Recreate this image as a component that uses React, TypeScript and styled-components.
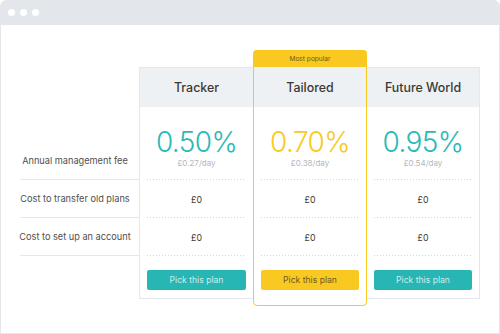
import React from "react";
import styled, { createGlobalStyle, css } from "styled-components";

const GlobalStyle = createGlobalStyle`
  html, body { margin: 0; padding: 0; background: #ffffff; }
  body { font-family: Inter, "Noto Sans", sans-serif; -webkit-font-smoothing: antialiased; }
`;

const TEAL = "#2bb9b5";
const YELLOW = "#f9c922";
const LINE = "#e4e8ec";

type Plan = {
  name: string;
  rate: string;
  perDay: string;
  transfer: string;
  setup: string;
  featured?: boolean;
  edge?: "left" | "right";
};

const plans: Plan[] = [
  { name: "Tracker", rate: "0.50%", perDay: "£0.27/day", transfer: "£0", setup: "£0", edge: "left" },
  { name: "Tailored", rate: "0.70%", perDay: "£0.38/day", transfer: "£0", setup: "£0", featured: true },
  { name: "Future World", rate: "0.95%", perDay: "£0.54/day", transfer: "£0", setup: "£0", edge: "right" },
];

const labels = ["Annual management fee", "Cost to transfer old plans", "Cost to set up an account"];

const Window = styled.div`
  width: 500px;
  height: 334px;
  box-sizing: border-box;
  border: 1px solid ${LINE};
  border-top: none;
  border-radius: 6px 6px 0 0;
  overflow: hidden;
  display: flex;
  flex-direction: column;
`;

const TitleBar = styled.div`
  height: 25px;
  flex: none;
  background: #e3e7eb;
  display: flex;
  align-items: center;
  gap: 5px;
  padding-left: 7px;
`;

const Dot = styled.span`
  width: 7px;
  height: 7px;
  border-radius: 50%;
  background: #ffffff;
`;

const Body = styled.div`
  display: flex;
  padding: 25px 0 0 19px;
`;

const LabelColumn = styled.div`
  width: 119px;
  padding-top: 92px;
  display: flex;
  flex-direction: column;
`;

const LabelCell = styled.div`
  height: 37px;
  border-bottom: 1px solid ${LINE};
  display: flex;
  align-items: center;
  justify-content: center;
  padding-right: 9px;
  font-size: 9.2px;
  color: #4f4f4f;
  white-space: nowrap;
`;

const PlanColumn = styled.div<{ $featured?: boolean; $edge?: "left" | "right" }>`
  width: 114px;
  box-sizing: border-box;
  display: flex;
  flex-direction: column;
  ${({ $featured, $edge }) =>
    $featured
      ? css`
          border: 1px solid ${YELLOW};
          border-radius: 4px;
          padding-bottom: 7px;
        `
      : css`
          margin-top: 17px;
          border-top: 1px solid ${LINE};
          border-bottom: 1px solid ${LINE};
          align-self: flex-start;
          ${$edge === "left" ? `border-left: 1px solid ${LINE};` : `border-right: 1px solid ${LINE}; width: 113px;`}
        `}
`;

const Badge = styled.div`
  height: 17px;
  margin: -1px -1px 0;
  background: ${YELLOW};
  border-radius: 4px 4px 0 0;
  display: flex;
  align-items: center;
  justify-content: center;
  font-size: 6.6px;
  color: #705b16;
`;

const Header = styled.div<{ $featured?: boolean }>`
  height: ${({ $featured }) => ($featured ? "40px" : "39px")};
  background: #eef1f4;
  display: flex;
  align-items: center;
  justify-content: center;
  font-size: 12.4px;
  font-weight: 500;
  color: #3b3835;
`;

const Cell = styled.div<{ $tall?: boolean }>`
  height: 37px;
  margin: 0 7px;
  display: flex;
  flex-direction: column;
  align-items: center;
  justify-content: center;
  background: repeating-linear-gradient(to right, #d3d8dc 0 1px, transparent 1px 3px) bottom / 100% 1px no-repeat;
  padding-top: 1px;
  font-size: 8.8px;
  color: #3b3835;
  ${({ $tall }) =>
    $tall &&
    css`
      justify-content: flex-start;
      padding-top: 20px;
      box-sizing: border-box;
      height: 73px;
    `}
`;

const Rate = styled.div<{ $featured?: boolean }>`
  font-size: 28px;
  font-weight: 300;
  line-height: 30px;
  letter-spacing: -0.6px;
  color: ${({ $featured }) => ($featured ? YELLOW : TEAL)};
`;

const PerDay = styled.div`
  margin-top: 1px;
  font-size: 8px;
  color: #b3b7bb;
`;

const ButtonArea = styled.div`
  padding: 11px 7px 8px;
`;

const PickButton = styled.button<{ $featured?: boolean }>`
  width: 100%;
  height: 20px;
  border: none;
  border-radius: 2px;
  font-family: inherit;
  font-size: 8.6px;
  cursor: pointer;
  background: ${({ $featured }) => ($featured ? YELLOW : "#27b6b3")};
  color: ${({ $featured }) => ($featured ? "#6c5a1b" : "#cdeeed")};
`;

export default function App() {
  return (
    <>
      <GlobalStyle />
      <Window>
        <TitleBar>
          <Dot />
          <Dot />
          <Dot />
        </TitleBar>
        <Body>
          <LabelColumn>
            {labels.map((l) => (
              <LabelCell key={l}>{l}</LabelCell>
            ))}
          </LabelColumn>
          {plans.map((p) => (
            <PlanColumn key={p.name} $featured={p.featured} $edge={p.edge}>
              {p.featured && <Badge>Most popular</Badge>}
              <Header $featured={p.featured}>{p.name}</Header>
              <Cell $tall>
                <Rate $featured={p.featured}>{p.rate}</Rate>
                <PerDay>{p.perDay}</PerDay>
              </Cell>
              <Cell>{p.transfer}</Cell>
              <Cell>{p.setup}</Cell>
              <ButtonArea>
                <PickButton $featured={p.featured}>Pick this plan</PickButton>
              </ButtonArea>
            </PlanColumn>
          ))}
        </Body>
      </Window>
    </>
  );
}
